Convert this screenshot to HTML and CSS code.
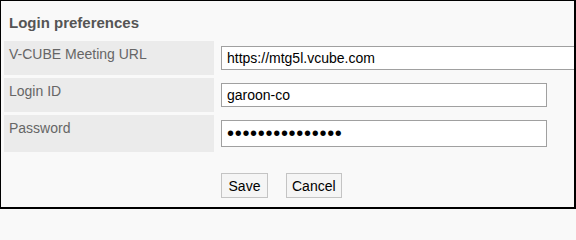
FILE: index.html
```html
<!DOCTYPE html>
<html>
<head>
<meta charset="utf-8">
<title>Login preferences</title>
<link rel="stylesheet" href="styles.css">
</head>
<body>
<div class="frame">
  <div class="title">Login preferences</div>
  <div class="form-grid">
    <div class="label">V-CUBE Meeting URL</div>
    <div class="value"><input class="field field-url" type="text" value="https://mtg5l.vcube.com"></div>
    <div class="label">Login ID</div>
    <div class="value"><input class="field field-short" type="text" value="garoon-co"></div>
    <div class="label">Password</div>
    <div class="value"><input class="field field-short field-pass" type="password" value="abcdefghijklmno"></div>
  </div>
  <div class="actions">
    <button class="btn" type="button">Save</button>
    <button class="btn" type="button">Cancel</button>
  </div>
</div>
</body>
</html>
```
FILE: styles.css
```css
* { box-sizing: border-box; }
html, body { margin: 0; padding: 0; }
body {
  font-family: "Liberation Sans", Arial, sans-serif;
  font-size: 14px;
  background: #f9f9f9;
}
.frame {
  width: 576px;
  height: 209px;
  border-style: solid;
  border-color: #000;
  border-width: 1px 2px 2px 1px;
  background: #f9f9f9;
  padding: 13px 0 0 3px;
  overflow: hidden;
}
.title {
  font-size: 15px;
  font-weight: bold;
  line-height: 17px;
  color: #555;
  padding-left: 5px;
  margin-bottom: 10px;
}
.form-grid {
  display: grid;
  grid-template-columns: 210px 1fr;
  column-gap: 3px;
  row-gap: 3px;
}
.label {
  background: #ebebeb;
  color: #666;
  padding: 5px 5px;
  line-height: 16px;
}
.value {
  padding: 5px 0 5px 4px;
}
.field {
  display: block;
  height: 24px;
  border: 1px solid #a0a0a0;
  background: #fff;
  padding: 0 5px;
  font-family: "Liberation Sans", Arial, sans-serif;
  font-size: 14px;
  color: #000;
  outline: none;
}
.field-url { width: 420px; }
.field-short { width: 326px; }
.field-pass {
  height: 27px;
  font-size: 20px;
  letter-spacing: 0.7px;
}
.actions {
  margin-top: 21px;
  padding-left: 217px;
  display: flex;
  gap: 18px;
}
.btn {
  height: 25px;
  min-width: 47px;
  padding: 0 5px;
  border: 1px solid #c4c4c4;
  background: #f5f5f5;
  font-family: "Liberation Sans", Arial, sans-serif;
  font-size: 14px;
  color: #000;
}
```
